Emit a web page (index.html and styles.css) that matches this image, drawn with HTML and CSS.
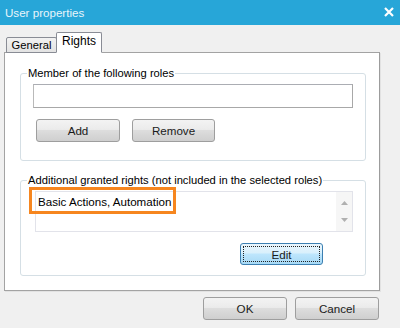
FILE: index.html
```html
<!DOCTYPE html>
<html lang="en">
<head>
    <meta charset="UTF-8">
    <title>User properties</title>
    <link rel="stylesheet" href="styles.css">
</head>
<body>
    <div class="titlebar">
        <span class="title">User properties</span>
        <svg class="close" width="10" height="10" viewBox="0 0 10 10">
            <path d="M1 1 L9 9 M9 1 L1 9" stroke="#fff" stroke-width="2.2" fill="none"/>
        </svg>
    </div>

    <!-- Tabs -->
    <div class="tabstrip">
        <div class="tab">General</div>
        <div class="tab active">Rights</div>
    </div>

    <div class="panel">
        <fieldset class="group group-roles">
            <legend>Member of the following roles</legend>
            <div class="textbox"></div>
            <div class="button-row">
                <button class="button button-add">Add</button>
                <button class="button">Remove</button>
            </div>
        </fieldset>

        <fieldset class="group group-rights">
            <legend>Additional granted rights (not included in the selected roles)</legend>
            <div class="listbox">
                <div class="list-item">Basic Actions, Automation</div>
                <div class="scrollbar">
                    <svg width="7" height="4" viewBox="0 0 7 4"><path d="M0 4 L3.5 0 L7 4 Z" fill="#b0b0b0"/></svg>
                    <svg width="7" height="4" viewBox="0 0 7 4"><path d="M0 0 L3.5 4 L7 0 Z" fill="#b0b0b0"/></svg>
                </div>
                <div class="highlight"></div>
            </div>
            <button class="button button-default button-edit">Edit</button>
        </fieldset>
    </div>

    <div class="footer">
        <button class="button">OK</button>
        <button class="button">Cancel</button>
    </div>
</body>
</html>
```

FILE: styles.css
```css
body {
    margin: 0;
    background-color: #f0f0f0;
    font-family: "Liberation Sans", Arial, sans-serif;
    font-size: 11.2px;
    color: #000;
}

.titlebar {
    height: 25px;
    background-color: #27a6d8;
    display: flex;
    align-items: center;
    justify-content: space-between;
    padding: 0 6px 0 5px;
}
.title {
    color: #e8f5fb;
    font-size: 11.6px;
}
.close {
    margin-top: -2px;
}

/* Tabs */
.tabstrip {
    display: flex;
    align-items: flex-end;
    height: 21px;
    margin-top: 7px;
    margin-bottom: -1px;
    padding-left: 6px;
    position: relative;
    z-index: 1;
}
.tab {
    box-sizing: border-box;
    height: 16px;
    width: 51px;
    padding: 0;
    text-align: center;
    border: 1px solid #898c95;
    border-radius: 2px 2px 0 0;
    background: linear-gradient(#f2f2f2, #e3e3e3);
    line-height: 15px;
    font-size: 11.2px;
}
.tab.active {
    height: 21px;
    width: 46px;
    margin-left: -1px;
    background: #fff;
    border-bottom-color: #fff;
    line-height: 16px;
    font-size: 12px;
}

.panel {
    box-sizing: border-box;
    width: 376px;
    height: 239px;
    margin-left: 4px;
    padding: 13px 0 0 15px;
    background-color: #fff;
    border: 1px solid #a3a3a3;
    border-right-color: #9c9c9c;
    box-shadow: 1px 1px 0 #e2e2e2;
}

.group {
    box-sizing: border-box;
    width: 346px;
    margin: 0;
    padding: 4px 12px 18px 12px;
    border: 1px solid #d5dfe5;
    border-radius: 3px;
}
.group legend {
    margin-left: -6px;
    padding: 0 1px;
    line-height: 14px;
    height: 14px;
}
.group-rights {
    margin-top: 12px;
    padding-bottom: 10px;
}

.textbox {
    box-sizing: border-box;
    width: 320px;
    height: 24px;
    border: 1px solid #b9b9b9;
    border-top-color: #abadb3;
    border-right-color: #a8a8a8;
    border-bottom-color: #a8a8a8;
}

.button-row {
    display: flex;
    gap: 12px;
    margin-top: 11px;
    margin-left: 3px;
}

.button {
    box-sizing: border-box;
    width: 83px;
    height: 23px;
    padding: 0;
    font-family: "Liberation Sans", Arial, sans-serif;
    font-size: 11.6px;
    font-weight: normal;
    color: #1a1a1a;
    border: 1px solid #9e9e9e;
    border-radius: 3px;
    background: linear-gradient(#f3f3f3 0%, #ebebeb 45%, #dddddd 50%, #cfcfcf 100%);
}
.button-add {
    width: 84px;
}
.button-default {
    border-color: #3c7fb1;
    background: linear-gradient(#eaf6fd 0%, #d9f0fc 45%, #bee6fd 50%, #a7d9f5 100%);
    outline: 1px dotted #222;
    outline-offset: -4px;
}
.button-edit {
    display: block;
    height: 22px;
    margin-top: 11px;
    margin-left: 207px;
}

.listbox {
    box-sizing: border-box;
    position: relative;
    display: flex;
    width: 318px;
    height: 41px;
    margin-left: 2px;
    border: 1px solid #e2e3ea;
}
.list-item {
    flex: 1;
    padding: 3px 0 0 2px;
    line-height: 14px;
    font-size: 11.6px;
}
.scrollbar {
    width: 16px;
    background-color: #f6f6f6;
    display: flex;
    flex-direction: column;
    justify-content: space-between;
    align-items: center;
    padding: 9px 0 9px 0;
    box-sizing: border-box;
}
.highlight {
    position: absolute;
    left: -7px;
    top: -5px;
    width: 147px;
    height: 27px;
    box-sizing: border-box;
    border: 3px solid #f6861f;
}

.footer {
    display: flex;
    justify-content: flex-end;
    gap: 8px;
    margin-top: 6px;
    padding-right: 21px;
}
.footer .button {
    width: 84px;
}
```
